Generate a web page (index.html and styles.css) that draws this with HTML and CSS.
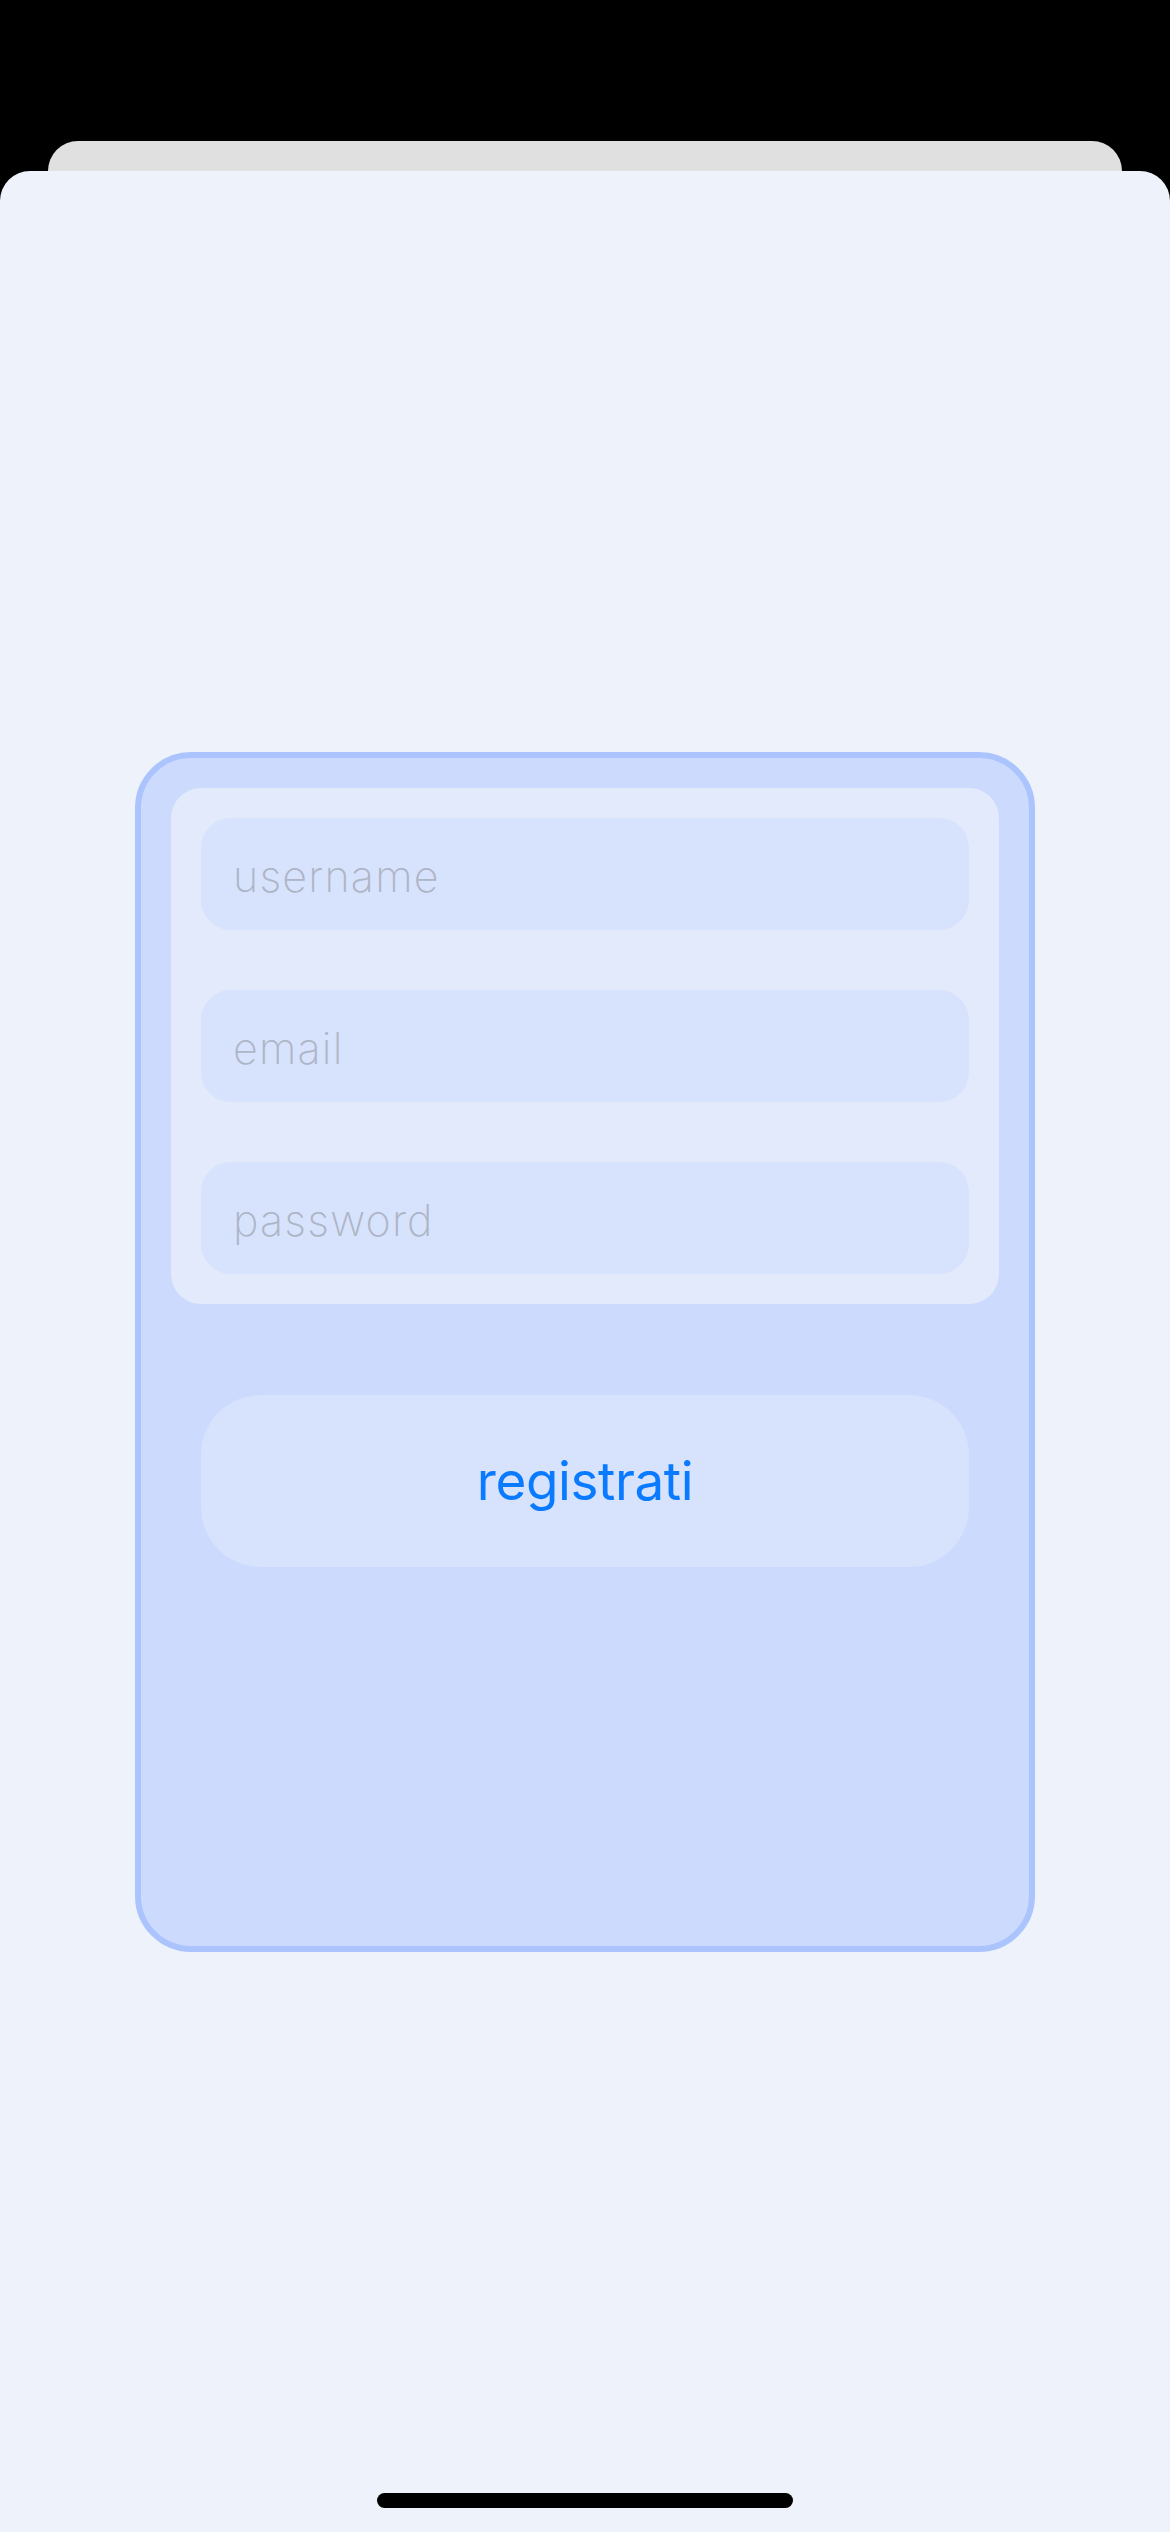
FILE: index.html
```html
<!DOCTYPE html>
<html lang="it">
<head>
<meta charset="utf-8">
<title>Registrati</title>
<link rel="stylesheet" href="styles.css">
</head>
<body>
<div class="back-sheet"></div>
<main class="sheet">
  <section class="card">
    <div class="fields">
      <div class="field"><span class="placeholder">username</span></div>
      <div class="field"><span class="placeholder">email</span></div>
      <div class="field"><span class="placeholder">password</span></div>
    </div>
    <div class="button"><span>registrati</span></div>
  </section>
  <div class="home-indicator"></div>
</main>
</body>
</html>
```

FILE: styles.css
```css
html, body {
  margin: 0;
  padding: 0;
}
body {
  background: #000;
  width: 1170px;
  height: 2532px;
  overflow: hidden;
  font-family: "Inter", "Liberation Sans", sans-serif;
}
.back-sheet {
  margin: 141px 48px 0;
  height: 30px;
  background: #e0e0e0;
  border-radius: 30px 30px 0 0;
}
.sheet {
  position: relative;
  height: 2361px;
  background: #eef2fb;
  border-radius: 30px 30px 0 0;
  display: flex;
  align-items: center;
  justify-content: center;
}
.card {
  box-sizing: border-box;
  width: 900px;
  height: 1200px;
  background: #ccdafd;
  border: 6px solid #abc4fe;
  border-radius: 56px;
  padding: 30px;
  display: flex;
  flex-direction: column;
}
.fields {
  background: #e2eafc;
  border-radius: 30px;
  padding: 30px;
  display: flex;
  flex-direction: column;
  gap: 60px;
}
.field {
  height: 112px;
  background: #d7e2fc;
  border-radius: 30px;
  padding-left: 32px;
  display: flex;
  align-items: center;
}
.placeholder {
  font-family: "Inter", "Lato", sans-serif;
  font-weight: 200;
  font-size: 43px;
  letter-spacing: 1.2px;
  color: #adb5c6;
  padding-top: 4px;
}
.button {
  margin: 91px 30px 0;
  height: 172px;
  background: #d7e2fc;
  border-radius: 60px;
  display: flex;
  align-items: center;
  justify-content: center;
}
.button span {
  font-family: "Inter", "Roboto", sans-serif;
  font-weight: 400;
  font-size: 53px;
  color: #0a7aff;
  letter-spacing: -0.4px;
}
.home-indicator {
  position: absolute;
  left: 377px;
  bottom: 24px;
  width: 416px;
  height: 15px;
  border-radius: 8px;
  background: #000;
}
```
